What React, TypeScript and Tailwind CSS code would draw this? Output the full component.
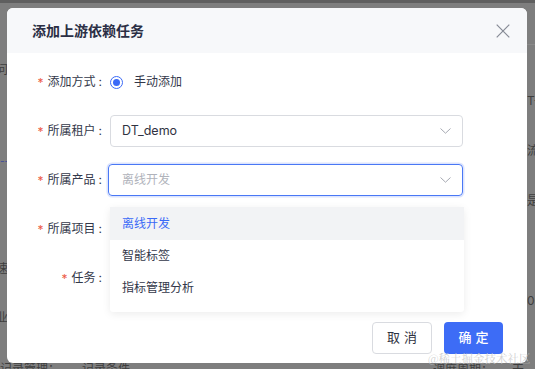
import React from "react";

const font = { fontFamily: 'Inter, "Noto Sans CJK SC", sans-serif' };

function Chevron() {
  return (
    <svg width="11" height="6" viewBox="0 0 11 6" fill="none" className="shrink-0">
      <path d="M0.5 0.5 L5.5 5.2 L10.5 0.5" stroke="#a6a9b2" strokeWidth="1" />
    </svg>
  );
}

function Label({ text }: { text: string }) {
  return (
    <div className="w-[95px] shrink-0 flex justify-end items-center text-[12px] text-[#33384a]">
      <span className="text-[#ec5b46] mr-[4px] text-[12px] relative top-[1px]">*</span>
      <span>{text}</span>
      <span className="ml-[3px]">:</span>
    </div>
  );
}

export default function App() {
  return (
    <div className="relative w-[535px] h-[369px] overflow-hidden bg-[#7e7e7e]" style={font}>
      {/* backdrop page remnants */}
      <div className="absolute left-0 top-0 w-full h-[3px] bg-[#5f5f5f]" />
      <div className="absolute left-[527px] top-[44px] w-[8px] h-px bg-[#8a8a8a]" />
      <span className="absolute left-[-4px] top-[61px] text-[12px] text-[#3e3e3e]">问</span>
      <span className="absolute left-[0px] top-[154px] text-[10px] text-[#3d4a9a]">--</span>
      <span className="absolute left-[-4px] top-[260px] text-[12px] text-[#3e3e3e]">速</span>
      <span className="absolute left-[-4px] top-[309px] text-[12px] text-[#3e3e3e]">业</span>
      <span className="absolute left-[0px] top-[360px] text-[12px] text-[#3e3e3e]">记录管理：</span>
      <span className="absolute left-[82px] top-[360px] text-[12px] text-[#3e3e3e]">记录条件</span>
      <span className="absolute left-[433px] top-[361px] text-[12px] text-[#3e3e3e]">调度周期：</span>
      <span className="absolute left-[512px] top-[361px] text-[12px] text-[#3e3e3e]">天</span>
      <span className="absolute left-[527px] top-[92px] text-[12px] text-[#3e3e3e]">T-</span>
      <span className="absolute left-[527px] top-[142px] text-[12px] text-[#3e3e3e]">流</span>
      <span className="absolute left-[527px] top-[192px] text-[12px] text-[#3e3e3e]">是</span>
      <span className="absolute left-[527px] top-[292px] text-[12px] text-[#3e3e3e]">00</span>

      {/* modal */}
      <div className="absolute left-[7px] top-[8px] w-[520px] h-[355px] bg-white rounded-[6px] flex flex-col overflow-hidden">
        <div className="h-[45px] shrink-0 bg-[#f7f8fa] flex items-center justify-between pl-[25px] pr-[17px]">
          <span className="text-[14px] font-semibold text-[#2b2f45]">添加上游依赖任务</span>
          <svg width="14" height="14" viewBox="0 0 14 14" fill="none">
            <path d="M0.7 0.7 L13.3 13.3 M13.3 0.7 L0.7 13.3" stroke="#878b96" strokeWidth="1.2" />
          </svg>
        </div>

        <div className="flex flex-col gap-[17px] pt-[13px]">
          {/* row 1 */}
          <div className="flex items-center h-[32px] gap-[8px]">
            <Label text="添加方式" />
            <div className="flex items-center gap-[11px]">
              <div className="w-[13px] h-[13px] rounded-full border border-[#3b6af7] flex items-center justify-center">
                <div className="w-[7px] h-[7px] rounded-full bg-[#3b6af7]" />
              </div>
              <span className="text-[12px] text-[#33384a]">手动添加</span>
            </div>
          </div>
          {/* row 2 */}
          <div className="flex items-center h-[32px] gap-[8px]">
            <Label text="所属租户" />
            <div className="w-[353px] h-[32px] border border-[#d9dbe0] rounded-[4px] flex items-center justify-between pl-[11px] pr-[11px]">
              <span className="text-[12.5px] text-[#2f3241]">DT_demo</span>
              <Chevron />
            </div>
          </div>
          {/* row 3 */}
          <div className="flex items-center h-[32px] gap-[8px]">
            <Label text="所属产品" />
            <div className="relative">
              <div className="w-[355px] h-[32px] -ml-[2px] border border-[#4a78f5] rounded-[4px] shadow-[0_0_0_1.5px_rgba(59,106,247,0.18)] flex items-center justify-between pl-[13px] pr-[11px]">
                <span className="text-[12px] text-[#b0b3bb]">离线开发</span>
                <Chevron />
              </div>
              <div className="absolute z-10 left-0 top-[43px] w-[354px] bg-white rounded-[3px] shadow-[0_2px_8px_rgba(0,0,0,0.08)] pb-[8px] flex flex-col">
                <div className="h-[33px] bg-[#f2f3f5] flex items-center pl-[12px] text-[12px] text-[#3b6af7]">离线开发</div>
                <div className="h-[32px] flex items-center pl-[12px] text-[12px] text-[#33384a]">智能标签</div>
                <div className="h-[32px] flex items-center pl-[12px] text-[12px] text-[#33384a]">指标管理分析</div>
              </div>
            </div>
          </div>
          {/* row 4 */}
          <div className="flex items-center h-[32px] gap-[8px]">
            <Label text="所属项目" />
          </div>
          {/* row 5 */}
          <div className="flex items-center h-[32px] gap-[8px]">
            <Label text="任务" />
          </div>
        </div>

        <div className="flex justify-end gap-[12px] pr-[24px] mt-[28px]">
          <button className="w-[60px] h-[32px] rounded-[4px] border border-[#d9dbe0] bg-white text-[13px] text-[#2f3241] tracking-[4px] pl-[4px]">取消</button>
          <button className="w-[59px] h-[32px] rounded-[4px] bg-[#3d6cf6] text-[13px] text-white font-medium tracking-[4px] pl-[4px]">确定</button>
        </div>
      </div>

      {/* watermark */}
      <span className="absolute z-20 left-[428px] top-[350px] text-[11.5px] text-[rgba(200,200,200,0.85)]" style={{ fontFamily: '"Noto Serif CJK SC", "Noto Sans CJK SC", serif' }}>@稀土掘金技术社区</span>
    </div>
  );
}
